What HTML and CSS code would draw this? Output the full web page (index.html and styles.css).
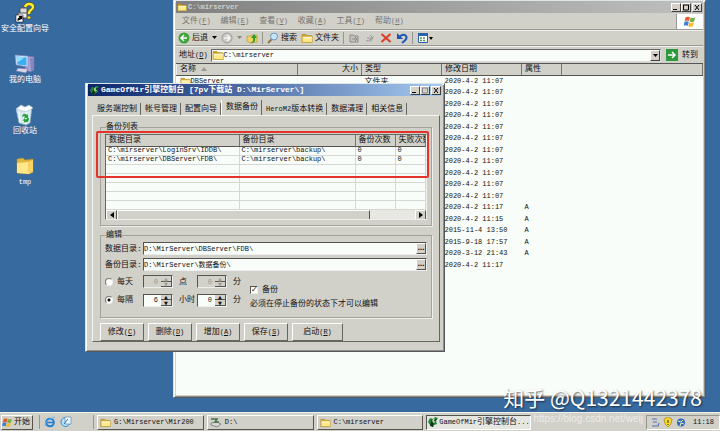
FILE: index.html
```
<!DOCTYPE html>
<html lang="zh-CN">
<head>
    <meta charset="UTF-8">
    <meta name="viewport" content="width=device-width, initial-scale=1.0">
    <title>GameOfMir引擎控制台</title>
    <link rel="stylesheet" href="styles.css">
</head>
<body>
    <!-- 公用图标 -->
    <svg class="defs" width="0" height="0">
        <symbol id="folder" viewBox="0 0 12 12">
            <path d="M1 2.5h4l1 1.2h4.6v6.8H1z" fill="#d9a520" stroke="#9c7410" stroke-width=".5"/>
            <path d="M1.2 4.6l.4-.4h9.8v6.2H1.2z" fill="#ffe98c" stroke="#b88d1c" stroke-width=".5"/>
            <path d="M2 5h8.6v1.2H2z" fill="#fff8cf"/>
        </symbol>
        <symbol id="folder-big" viewBox="0 0 22 22">
            <path d="M3 4l6-1 2 2 8-1v13l-4 2-12-1z" fill="#e0b53c" stroke="#b58a22" stroke-width=".5"/>
            <path d="M3 8l11-1 1 12-12-1z" fill="#ffe78a"/>
            <path d="M14 7l5-2v12l-4 2z" fill="#f5d263"/>
        </symbol>
        <symbol id="mir" viewBox="0 0 12 12">
            <path d="M1 6l2-4 3 1 2-2 3 1-2 3 1 3-3 1-1 2-3-2z" fill="#24803a"/>
            <path d="M3 10l2-7 2 2-1 6zM7 4l3-1-2 3z" fill="#0d3517"/>
            <path d="M5 4l3-2-1 3 2 1-3 1z" fill="#b7d69b"/>
        </symbol>
        <symbol id="flag" viewBox="0 0 12 12">
            <path d="M2 2q2-1 4 0L5 5.6q-2-1-4 0z" fill="#e9582c"/>
            <path d="M6.600 2.300q2 1 4.200 0L9.800 6q-2 1-4.200 0z" fill="#76b043"/>
            <path d="M.9 6.200q2-1 4 0L4 10q-2-1-4 0z" fill="#3f7fd6"/>
            <path d="M5.400 6.600q2 1 4.200 0l-1 3.700q-2 1-4.200 0z" fill="#f5bd2a"/>
        </symbol>
    </svg>

    <div class="desktop">
        <div class="shortcuts">
            <a class="shortcut" href="#">
                <svg width="22" height="22" viewBox="0 0 22 22">
                    <path d="M6 6h7v7H6z" fill="#ddd" stroke="#555"/>
                    <path d="M4 11h9v5H4z" fill="#eee" stroke="#555"/>
                    <path d="M11 5q1-3 4-3 4 0 4 3 0 2-2 3t-2 4" fill="none" stroke="#554b00" stroke-width="3.500"/>
                    <path d="M11 5q1-3 4-3 4 0 4 3 0 2-2 3t-2 4" fill="none" stroke="#ffee2e" stroke-width="2.500"/>
                    <circle cx="15" cy="15.500" r="1.600" fill="#ffee2e" stroke="#554b00" stroke-width=".5"/>
                    <path d="M2 13h7v7H2z" fill="#fff" stroke="#000" stroke-width=".5"/>
                    <path d="M3.500 19v-2l2-2-1-1h4v4l-1-1z" fill="#000"/>
                </svg>
                安全配置向导
            </a>
            <a class="shortcut" href="#">
                <svg width="22" height="22" viewBox="0 0 22 22">
                    <path d="M13 3l7 1v13l-4 2-5-3z" fill="#aaa5d6" stroke="#7370a8" stroke-width=".6"/>
                    <path d="M16 5l4 0v11l-3 2z" fill="#8782c0"/>
                    <path d="M1 2l13 1v11L2 12z" fill="#d5def3" stroke="#707eb4" stroke-width=".6"/>
                    <path d="M2.500 3.500l10 1v8l-9-1z" fill="#3cafee"/>
                    <path d="M2.500 3.500l8 1-7 5z" fill="#8be0ff"/>
                    <path d="M4 15l10 1-2 4-10-2z" fill="#d9d7ec" stroke="#7370a8" stroke-width=".6"/>
                </svg>
                我的电脑
            </a>
            <a class="shortcut" href="#">
                <svg width="22" height="22" viewBox="0 0 22 22">
                    <path d="M2 5l16-2-2 16-4 2-7-2z" fill="#d8e9f2" stroke="#8facbf" stroke-width=".6"/>
                    <path d="M2 5l5-4 4 2 4-2 4 3-7 4z" fill="#f8fcff" stroke="#a5bccb" stroke-width=".6"/>
                    <path d="M5 8l1 10M12 8v12" stroke="#fff" stroke-width="1"/>
                    <path d="M8 12q2-4 5-1l1-1v4h-4l1-1q-1-2-2 0zM15 14q0 5-4 4v1l-2-3 2-2v1q2 1 2-1z" fill="#27a238"/>
                </svg>
                回收站
            </a>
            <a class="shortcut" href="#">
                <svg width="22" height="22"><use href="#folder-big"/></svg>
                <span class="mono">tmp</span>
            </a>
        </div>

        <!-- 资源管理器 -->
        <section class="window explorer">
            <header class="titlebar inactive">
                <svg width="10" height="10"><use href="#folder"/></svg>
                <span class="caption">C:\mirserver</span>
                <button class="win-btn" aria-label="最小化"><svg width="8" height="7"><path d="M1 5.500h4" stroke="#000"/></svg></button>
                <button class="win-btn" aria-label="最大化"><svg width="8" height="7"><path d="M1.500 1v5h5v-5M1 1h6" fill="none" stroke="#000"/></svg></button>
                <button class="win-btn close" aria-label="关闭"><svg width="8" height="7"><path d="M2 1l4 5M6 1l-4 5" stroke="#000"/></svg></button>
            </header>
            <nav class="menubar">
                <a href="#">文件<span class="mono">(<u>F</u>)</span></a>
                <a href="#">编辑<span class="mono">(<u>E</u>)</span></a>
                <a href="#">查看<span class="mono">(<u>V</u>)</span></a>
                <a href="#">收藏<span class="mono">(<u>A</u>)</span></a>
                <a href="#">工具<span class="mono">(<u>T</u>)</span></a>
                <a href="#">帮助<span class="mono">(<u>H</u>)</span></a>
                <div class="logo"><svg width="14" height="13" viewBox="0 0 12 12"><use href="#flag"/></svg></div>
            </nav>
            <div class="toolbar">
                <button class="tool">
                    <svg width="12" height="12"><circle cx="6" cy="6" r="5.500" fill="#3da539"/><path d="M6 3L3 6l3 3M3 6h6" fill="none" stroke="#fff" stroke-width="1.500"/></svg>
                    后退
                </button>
                <button class="tool drop" aria-label="后退列表"><svg width="5" height="4"><path d="M0 0h5L2.500 3z"/></svg></button>
                <button class="tool" aria-label="前进">
                    <svg width="12" height="12"><circle cx="6" cy="6" r="5" fill="#c9c9c5" stroke="#9d9d99"/><path d="M6 3l3 3-3 3M9 6H3" fill="none" stroke="#f5f5f5" stroke-width="1.500"/></svg>
                </button>
                <button class="tool drop" aria-label="前进列表"><svg width="5" height="4"><path d="M0 0h5L2.500 3z" fill="#888"/></svg></button>
                <button class="tool" aria-label="向上">
                    <svg width="12" height="12"><path d="M1 4h4l1-1h5v7l-7 1-3-2z" fill="#f0d35c" stroke="#a8852a" stroke-width=".5"/><path d="M4 11q4-1 3-5H5l3-4 3 4H9q1 4-3 5z" fill="#2c9c32"/></svg>
                </button>
                <span class="sep"></span>
                <button class="tool">
                    <svg width="12" height="12"><path d="M5 7l-4 4" stroke="#8d7445" stroke-width="2"/><circle cx="7" cy="4.500" r="3.500" fill="#c3e5fa" stroke="#7894b5"/></svg>
                    搜索
                </button>
                <button class="tool">
                    <svg width="12" height="12"><use href="#folder"/></svg>
                    文件夹
                </button>
                <span class="sep"></span>
                <button class="tool" aria-label="移至"><svg width="12" height="12"><path d="M2 3h3l1 1h4v6H2zM4 7h5M7 5l2 2-2 2" fill="#c2c2be" stroke="#8b8b87"/></svg></button>
                <button class="tool" aria-label="复制到"><svg width="12" height="12"><path d="M2 9l4-1 4-4M3 6h5M6 3l3 3-3 4" fill="none" stroke="#9a9a96"/></svg></button>
                <button class="tool" aria-label="删除"><svg width="12" height="12"><path d="M1.500 2l9 8M10.500 2l-9 8" stroke="#dd3a20" stroke-width="1.800"/></svg></button>
                <button class="tool" aria-label="撤消"><svg width="12" height="12"><path d="M3 5q5-4 7-1t-4 7" fill="none" stroke="#2055b5" stroke-width="2"/><path d="M1 1v6h6z" fill="#2055b5"/></svg></button>
                <span class="sep"></span>
                <button class="tool" aria-label="查看"><svg width="16" height="12"><path d="M1.500 1.500h9v9h-9z" fill="#fff" stroke="#2d61ac"/><path d="M1 1h10v3H1z" fill="#2d61ac"/><path d="M3 6h2M6 6h2M3 8.500h2M6 8.500h2" stroke="#4d9a57" stroke-width="1.500"/><path d="M12 5h4l-2 3z"/></svg></button>
            </div>
            <div class="addressbar">
                <label for="address">地址<span class="mono">(<u>D</u>)</span></label>
                <div class="combo">
                    <svg width="12" height="12"><use href="#folder"/></svg>
                    <select id="address" class="mono"><option>C:\mirserver</option></select>
                    <span class="combo-arrow"><svg width="5" height="3"><path d="M0 0h5L2.500 3z"/></svg></span>
                </div>
                <button class="tool go">
                    <svg width="12" height="12"><path d="M0 0h12v12H0z" fill="#2c9a3c"/><path d="M6 3l3 3-3 3M9 6H2" fill="none" stroke="#fff" stroke-width="1.500"/></svg>
                    转到
                </button>
            </div>
            <div class="file-view">
                <table class="files">
                    <colgroup><col class="c-name"><col class="c-size"><col class="c-type"><col class="c-date"><col class="c-attr"><col></colgroup>
                    <thead>
                        <tr><th>名称 <svg width="6" height="4"><path d="M0 4h6L3 0z" fill="#999"/></svg></th><th class="right">大小</th><th>类型</th><th>修改日期</th><th>属性</th><th></th></tr>
                    </thead>
                    <tbody class="mono">
                        <tr><td><div class="file"><svg width="11" height="11"><use href="#folder"/></svg>DBServer</div></td><td></td><td class="cjk">文件夹</td><td>2020-4-2 11:07</td><td></td><td></td></tr>
                        <tr><td></td><td></td><td></td><td>2020-4-2 11:07</td><td></td><td></td></tr>
                        <tr><td></td><td></td><td></td><td>2020-4-2 11:07</td><td></td><td></td></tr>
                        <tr><td></td><td></td><td></td><td>2020-4-2 11:07</td><td></td><td></td></tr>
                        <tr><td></td><td></td><td></td><td>2020-4-2 11:07</td><td></td><td></td></tr>
                        <tr><td></td><td></td><td></td><td>2020-4-2 11:07</td><td></td><td></td></tr>
                        <tr><td></td><td></td><td></td><td>2020-4-2 11:07</td><td></td><td></td></tr>
                        <tr><td></td><td></td><td></td><td>2020-4-2 11:07</td><td></td><td></td></tr>
                        <tr><td></td><td></td><td></td><td>2020-4-2 11:07</td><td></td><td></td></tr>
                        <tr><td></td><td></td><td></td><td>2020-4-2 11:07</td><td></td><td></td></tr>
                        <tr><td></td><td></td><td></td><td>2020-4-2 11:07</td><td></td><td></td></tr>
                        <tr><td></td><td></td><td></td><td>2020-4-2 11:17</td><td>A</td><td></td></tr>
                        <tr><td></td><td></td><td></td><td>2020-4-2 11:15</td><td>A</td><td></td></tr>
                        <tr><td></td><td></td><td></td><td>2015-11-4 13:50</td><td>A</td><td></td></tr>
                        <tr><td></td><td></td><td></td><td>2015-9-18 17:57</td><td>A</td><td></td></tr>
                        <tr><td></td><td></td><td></td><td>2020-3-12 21:43</td><td>A</td><td></td></tr>
                        <tr><td></td><td></td><td></td><td>2020-4-2 11:17</td><td></td><td></td></tr>
                    </tbody>
                </table>
            </div>
        </section>

        <!-- 引擎控制台 -->
        <section class="window console">
            <header class="titlebar">
                <svg width="11" height="11"><use href="#mir"/></svg>
                <span class="caption">GameOfMir引擎控制台 [7pv下载站 D:\MirServer\]</span>
                <button class="win-btn" aria-label="最小化"><svg width="8" height="7"><path d="M1 5.500h4" stroke="#000"/></svg></button>
                <button class="win-btn" aria-label="最大化" disabled><svg width="8" height="7"><path d="M1.500 1v5h5v-5M1 1h6" fill="none" stroke="#888"/></svg></button>
                <button class="win-btn close" aria-label="关闭"><svg width="8" height="7"><path d="M2 1l4 5M6 1l-4 5" stroke="#000"/></svg></button>
            </header>
            <div class="tabs">
                <button class="tab">服务端控制</button>
                <button class="tab">帐号管理</button>
                <button class="tab">配置向导</button>
                <button class="tab active">数据备份</button>
                <button class="tab"><span class="mono">HeroM2</span>版本转换</button>
                <button class="tab">数据清理</button>
                <button class="tab">相关信息</button>
            </div>
            <div class="tab-page">
                <fieldset class="group">
                    <legend>备份列表</legend>
                    <div class="list-view">
                        <table class="backup">
                            <colgroup><col class="c-data"><col class="c-back"><col class="c-count"><col></colgroup>
                            <thead>
                                <tr><th>数据目录</th><th>备份目录</th><th>备份次数</th><th>失败次数</th></tr>
                            </thead>
                            <tbody class="mono">
                                <tr><td>C:\mirserver\LoginSrv\IDDB\</td><td>C:\mirserver\backup\</td><td>0</td><td>0</td></tr>
                                <tr><td>C:\mirserver\DBServer\FDB\</td><td>C:\mirserver\backup\</td><td>0</td><td>0</td></tr>
                                <tr><td></td><td></td><td></td><td></td></tr>
                                <tr><td></td><td></td><td></td><td></td></tr>
                                <tr><td></td><td></td><td></td><td></td></tr>
                                <tr><td></td><td></td><td></td><td></td></tr>
                                <tr><td></td><td></td><td></td><td></td></tr>
                            </tbody>
                        </table>
                        <div class="scrollbar">
                            <button class="scroll-btn" aria-label="向左"><svg width="4" height="6"><path d="M4 0v6L0 3z"/></svg></button>
                            <div class="thumb"></div>
                            <button class="scroll-btn" aria-label="向右"><svg width="4" height="6"><path d="M0 0v6l4-3z"/></svg></button>
                        </div>
                    </div>
                </fieldset>
                <fieldset class="group edit">
                    <legend>编辑</legend>
                    <div class="path-row">
                        <label for="data-dir">数据目录:</label>
                        <div class="path"><input id="data-dir" type="text" value="D:\MirServer\DBServer\FDB\"><button aria-label="浏览数据目录">…</button></div>
                    </div>
                    <div class="path-row">
                        <label for="backup-dir">备份目录:</label>
                        <div class="path"><input id="backup-dir" type="text" value="D:\MirServer\数据备份\"><button aria-label="浏览备份目录">…</button></div>
                    </div>
                    <div class="schedule">
                        <div class="times">
                            <label><input type="radio" name="mode">每天</label>
                            <div class="spin off"><input type="number" value="0" aria-label="点" disabled><span class="arrows"><button disabled aria-label="加">▲</button><button disabled aria-label="减">▼</button></span></div>
                            <span>点</span>
                            <div class="spin off"><input type="number" value="0" aria-label="分" disabled><span class="arrows"><button disabled aria-label="加">▲</button><button disabled aria-label="减">▼</button></span></div>
                            <span>分</span>
                            <label><input type="radio" name="mode" checked>每隔</label>
                            <div class="spin"><input type="number" value="6" aria-label="小时"><span class="arrows"><button aria-label="加">▲</button><button aria-label="减">▼</button></span></div>
                            <span>小时</span>
                            <div class="spin"><input type="number" value="0" aria-label="分"><span class="arrows"><button aria-label="加">▲</button><button aria-label="减">▼</button></span></div>
                            <span>分</span>
                        </div>
                        <div class="enable">
                            <label><input type="checkbox" checked>备份</label>
                            <p>必须在停止备份的状态下才可以编辑</p>
                        </div>
                    </div>
                </fieldset>
                <div class="actions">
                    <button>修改<span class="mono">(<u>C</u>)</span></button>
                    <button>删除<span class="mono">(<u>D</u>)</span></button>
                    <button>增加<span class="mono">(<u>A</u>)</span></button>
                    <button>保存<span class="mono">(<u>S</u>)</span></button>
                    <button class="wide">启动<span class="mono">(<u>R</u>)</span></button>
                </div>
            </div>
            <div class="mark"></div>
        </section>
    </div>

    <footer class="taskbar">
        <button class="task start"><svg width="11" height="11" viewBox="0 0 12 12"><use href="#flag"/></svg>开始</button>
        <div class="quick">
            <a href="#" aria-label="Internet Explorer"><svg width="12" height="12"><circle cx="6" cy="6.500" r="3.800" fill="none" stroke="#2480d0" stroke-width="2"/><path d="M3 6.500h7" stroke="#2480d0" stroke-width="1.500"/><path d="M1 10Q1 4 11 1" fill="none" stroke="#67b5ee"/></svg></a>
            <a href="#" aria-label="显示桌面"><svg width="12" height="12"><circle cx="5.500" cy="6" r="4.500" fill="#b9e1f8" stroke="#3c87c2"/><path d="M5 1h6v7H5z" fill="#eef8ff" stroke="#5492bd" stroke-width=".7"/><path d="M4 8l4-5" stroke="#3c6c9a"/></svg></a>
        </div>
        <div class="tasks">
            <button class="task"><svg width="11" height="11"><use href="#folder"/></svg><span class="mono">G:\Mirserver\Mir200</span></button>
            <button class="task"><svg width="12" height="11"><path d="M1 6l6-1 4 2-4 3-6-2z" fill="#d6d6d6" stroke="#555" stroke-width=".6"/><path d="M1 2h6l-2 3h4" fill="none" stroke="#477347" stroke-width="1.500"/></svg><span class="mono">D:\</span></button>
            <button class="task"><svg width="11" height="11"><use href="#folder"/></svg><span class="mono">C:\mirserver</span></button>
            <button class="task current"><svg width="12" height="12"><use href="#mir"/></svg><span><span class="mono">GameOfMir</span>引擎控制台<span class="mono">...</span></span></button>
        </div>
        <div class="tray">
            <svg width="9" height="11"><path d="M1 2h5M2 5h4M1 9h6l1-3" fill="none" stroke="#5871bd" stroke-width="1.200"/></svg>
            <svg width="10" height="11"><path d="M5 0l4 2q0 6-4 8-4-2-4-8z" fill="#f7d62e" stroke="#a98515" stroke-width=".7"/><path d="M5 3v3M5 7v1" stroke="#333"/></svg>
            <svg width="10" height="11"><circle cx="5" cy="5.500" r="4" fill="#3569bd"/><path d="M2 4l3 1 2-2M4 9l1-3 3 1" fill="none" stroke="#dff0b3"/></svg>
            <span class="clock mono">11:18</span>
        </div>
    </footer>

    <div class="watermark">知乎 @Q1321442378</div>
    <div class="source">https://blog.csdn.net/weij</div>
</body>
</html>
```

FILE: styles.css
```
* {
    box-sizing: border-box;
}

body {
    margin: 0;
    min-height: 100vh;
    display: flex;
    flex-direction: column;
    position: relative;
    overflow: hidden;
    background-color: #376a9f;
    color: #111;
    font-family: "Liberation Mono", "Noto Sans CJK SC", monospace;
    font-size: 8px;
    line-height: 8px;
}

button, input, select {
    font: inherit;
    color: inherit;
    margin: 0;
    padding: 0;
    border: none;
    border-radius: 0;
    background: none;
}

a {
    color: inherit;
    text-decoration: none;
}

svg {
    flex: none;
    display: block;
}

.defs {
    position: absolute;
}

.mono {
    font-size: 7px;
}

.cjk {
    font-size: 8px;
}

/* 桌面 */
.desktop {
    flex: 1;
    position: relative;
}

.shortcuts {
    display: flex;
    flex-direction: column;
    gap: 18px;
    width: 50px;
    padding-top: 2px;
}

.shortcut {
    display: flex;
    flex-direction: column;
    align-items: center;
    gap: 1px;
    height: 33px;
    color: #fff;
    white-space: nowrap;
}

/* 窗口 */
.window {
    position: absolute;
    display: flex;
    flex-direction: column;
    background-color: #d1d0c9;
    border: 1px solid;
    border-color: #dfe6ea #55585c #55585c #dfe6ea;
    box-shadow: inset 1px 1px #fff, inset -1px -1px #8d8d88;
}

.titlebar {
    display: flex;
    align-items: center;
    height: 12px;
    padding: 0 1px 0 1px;
    gap: 1px;
    color: #fff;
    font-weight: bold;
    background: linear-gradient(to right, #0a246a, #a6caf0);
}

.titlebar.inactive {
    color: #d4d0c8;
    font-size: 7px;
    background: linear-gradient(to right, #808080, #c0c0c0);
}

.caption {
    flex: 1;
    white-space: nowrap;
}

.win-btn {
    width: 10px;
    height: 9px;
    margin-right: -1px;
    background-color: #d4d0c8;
    border: 1px solid;
    border-color: #fff #404040 #404040 #fff;
}

.win-btn.close {
    margin: 0 0 0 1px;
}

/* 资源管理器 */
.explorer {
    left: 173px;
    top: 0;
    width: 533px;
    height: 398px;
    padding: 0 2px 2px;
}

.menubar {
    display: flex;
    align-items: center;
    gap: 10px;
    height: 17px;
    padding-left: 6px;
    color: #77756f;
    border-bottom: 1px solid #9a9992;
}

.menubar .logo {
    display: flex;
    align-items: center;
    justify-content: center;
    width: 27px;
    height: 15px;
    margin-left: auto;
    background-color: #fff;
    border-left: 1px solid #999;
}

.toolbar {
    display: flex;
    align-items: center;
    gap: 4px;
    height: 16px;
    padding-left: 2px;
    border-top: 1px solid #eee;
    border-bottom: 1px solid #9a9992;
}

.tool {
    display: flex;
    align-items: center;
    gap: 2px;
    white-space: nowrap;
}

.sep {
    width: 1px;
    height: 12px;
    background-color: #96958e;
}

.addressbar {
    display: flex;
    align-items: center;
    gap: 3px;
    height: 17px;
    padding: 0 5px 0 3px;
    border-top: 1px solid #eee;
}

.combo {
    flex: 1;
    display: flex;
    align-items: center;
    height: 13px;
    background-color: #f9fdf9;
    border: 1px solid;
    border-color: #666 #ddd #ddd #666;
}

.combo select {
    flex: 1;
    appearance: none;
    outline: none;
}

.combo-arrow {
    display: flex;
    align-items: center;
    justify-content: center;
    width: 10px;
    height: 11px;
    background-color: #d4d0c8;
    border: 1px solid;
    border-color: #fff #404040 #404040 #fff;
}

.tool.go {
    gap: 4px;
    margin-left: 2px;
}

.file-view {
    flex: 1;
    background-color: #f9fdf9;
    border-top: 1px solid #555;
}

table {
    width: 100%;
    table-layout: fixed;
    border-collapse: collapse;
}

th, td {
    padding: 0 0 0 3px;
    font-weight: normal;
    text-align: left;
    white-space: nowrap;
    overflow: hidden;
}

th {
    background-color: #d1d0c9;
    border-right: 1px solid #77766f;
    border-bottom: 1px solid #55544f;
}

.files th {
    height: 11px;
    border-left: 1px solid #eee;
}

.files th.right {
    text-align: right;
    padding-right: 3px;
}

.files th svg {
    display: inline-block;
    vertical-align: middle;
}

.files td {
    height: 11px;
    line-height: 7px;
}

.files tr:nth-child(odd) td {
    height: 12px;
}

.file {
    display: flex;
    align-items: center;
}

.c-name { width: 121px; }
.c-size { width: 64px; }
.c-type { width: 80px; }
.c-date { width: 80px; }
.c-attr { width: 40px; }

/* 引擎控制台 */
.console {
    left: 85px;
    top: 83px;
    width: 360px;
    height: 269px;
    padding: 0 2px 2px;
}

.tabs {
    display: flex;
    align-items: flex-end;
    height: 19px;
    padding-left: 5px;
}

.tab {
    height: 12px;
    padding: 0 3px 0 4px;
    border-right: 1px solid #66655f;
    white-space: nowrap;
}

.tab.active {
    height: 15px;
    padding-bottom: 2px;
    border-left: 1px solid #fff;
}

.tab-page {
    flex: 1;
    margin: 0 2px 7px 4px;
    padding: 7px 7px 0;
    border: 1px solid;
    border-color: #f4f4f0 #66655f #66655f #f4f4f0;
}

.group {
    min-width: 0;
    margin: 0 0 5px;
    padding: 3px 4px 5px;
    border: 1px solid #a3a29b;
    box-shadow: 1px 1px #efefeb;
}

.group legend {
    margin-left: 1px;
    padding: 0;
}

.list-view {
    height: 86px;
    display: flex;
    flex-direction: column;
    justify-content: space-between;
    overflow: hidden;
    border: 1px solid;
    border-color: #666 #eee #eee #666;
    background-color: #f9fdf9;
}

.backup th {
    height: 11px;
}

.backup td {
    height: 9px;
    padding-left: 2px;
    line-height: 7px;
    border-right: 1px solid #d5d8d2;
    border-bottom: 1px solid #d5d8d2;
}

.c-data { width: 133px; }
.c-back { width: 116px; }
.c-count { width: 40px; }

.scrollbar {
    display: flex;
    flex: none;
    height: 11px;
    background-color: #e8e8e3;
}

.scroll-btn, .thumb {
    display: flex;
    align-items: center;
    justify-content: center;
    width: 11px;
    background-color: #d1d0c9;
    border: 1px solid;
    border-color: #fff #55544f #55544f #fff;
}

.thumb {
    width: 79%;
    margin-right: auto;
}

.edit {
    padding-bottom: 9px;
}

.path-row {
    display: flex;
    align-items: center;
    margin-bottom: 3px;
}

.path-row label {
    width: 38px;
    white-space: nowrap;
}

.path {
    flex: 1;
    display: flex;
    height: 13px;
    background-color: #f9fdf9;
    border: 1px solid;
    border-color: #55544f #eee #eee #55544f;
}

.path input {
    flex: 1;
    min-width: 0;
    font-size: 7px;
    outline: none;
}

.path button {
    width: 10px;
    background-color: #d1d0c9;
    border: 1px solid;
    border-color: #fff #55544f #55544f #fff;
    font-family: "DejaVu Sans", sans-serif;
    font-size: 7px;
    font-weight: bold;
    line-height: 7px;
}

.schedule {
    display: flex;
    gap: 7px;
}

.times {
    display: grid;
    grid-template-columns: 34px 30px 16px 30px 12px;
    align-items: center;
    gap: 3px 4px;
}

.times label, .enable label {
    display: flex;
    align-items: center;
    gap: 4px;
    white-space: nowrap;
}

.times > span {
    padding-left: 2px;
    white-space: nowrap;
}

input[type="radio"] {
    appearance: none;
    width: 8px;
    height: 8px;
    border-radius: 50%;
    border: 1px solid;
    border-color: #77766f #eee #eee #77766f;
    background-color: #fff;
}

input[type="radio"]:checked {
    background-image: radial-gradient(circle, #111 0 1px, #fff 2px);
}

.spin {
    display: flex;
    height: 13px;
    background-color: #f9fdf9;
    border: 1px solid;
    border-color: #55544f #eee #eee #55544f;
}

.spin input {
    flex: 1;
    min-width: 0;
    padding-right: 3px;
    font-size: 7px;
    text-align: right;
    appearance: textfield;
}

.spin input::-webkit-inner-spin-button {
    appearance: none;
}

.arrows {
    display: grid;
    grid-template-rows: 1fr 1fr;
    width: 11px;
}

.arrows button {
    min-height: 0;
    background-color: #d1d0c9;
    border-bottom: 1px solid #55544f;
    border-right: 1px solid #55544f;
    font-family: "DejaVu Sans", sans-serif;
    font-size: 5px;
    line-height: 4px;
}

.spin.off, .spin.off button {
    color: #9a9992;
    background-color: #d1d0c9;
}

.enable {
    display: flex;
    flex-direction: column;
    gap: 6px;
    padding-top: 12px;
}

.enable p {
    margin: 0;
    white-space: nowrap;
}

input[type="checkbox"] {
    appearance: none;
    width: 8px;
    height: 8px;
    border: 1px solid;
    border-color: #55544f #eee #eee #55544f;
    background-color: #fff;
    font: bold 8px/6px "DejaVu Sans", sans-serif;
}

input[type="checkbox"]:checked::before {
    content: "✓";
}

.actions {
    display: flex;
    gap: 4px;
}

.actions button {
    width: 44px;
    height: 18px;
    border: 1px solid;
    border-color: #fff #66655f #66655f #fff;
    white-space: nowrap;
}

.actions .wide {
    width: 51px;
}

/* 红框标注 */
.mark {
    position: absolute;
    left: 10px;
    top: 47px;
    width: 333px;
    height: 47px;
    border: 2px solid #e3342c;
    border-radius: 2px;
}

/* 任务栏 */
.taskbar {
    display: flex;
    align-items: center;
    gap: 6px;
    height: 19px;
    padding-left: 1px;
    background-color: #d1d0c9;
    border-top: 1px solid #f0f0ec;
}

.task {
    flex: 1;
    display: flex;
    align-items: center;
    gap: 3px;
    height: 15px;
    padding-left: 2px;
    border: 1px solid;
    border-color: #fff #55544f #55544f #fff;
    white-space: nowrap;
    overflow: hidden;
}

.task.start {
    flex: none;
    width: 32px;
    gap: 1px;
    padding: 0;
}

.task.current {
    gap: 0;
    padding: 0;
    background-color: #e6e6e1;
    border-color: #55544f #fff #fff #55544f;
}

.quick {
    display: flex;
    align-items: center;
    gap: 4px;
    width: 55px;
    height: 14px;
    padding-left: 4px;
    border-left: 1px solid #96958e;
    border-right: 1px solid #96958e;
}

.tasks {
    flex: 1;
    display: flex;
    gap: 3px;
    max-width: 434px;
    margin-left: -3px;
}

.tray {
    display: flex;
    align-items: center;
    gap: 3px;
    height: 15px;
    margin-left: auto;
    padding: 0 5px 0 4px;
    border: 1px solid;
    border-color: #96958e #fff #fff #96958e;
}

.clock {
    margin-left: 4px;
}

/* 水印 */
.watermark, .source {
    position: absolute;
    white-space: nowrap;
    color: #fff;
}

.watermark {
    right: 18px;
    bottom: 20px;
    font-family: "Noto Sans CJK SC", sans-serif;
    font-size: 21px;
    line-height: 28px;
    text-shadow: 1px 1px 2px rgba(0, 0, 0, 0.6);
}

.source {
    right: 77px;
    bottom: 6px;
    font-family: "Liberation Sans", Arial, sans-serif;
    font-size: 10px;
    line-height: 12px;
    opacity: 0.6;
}
```
